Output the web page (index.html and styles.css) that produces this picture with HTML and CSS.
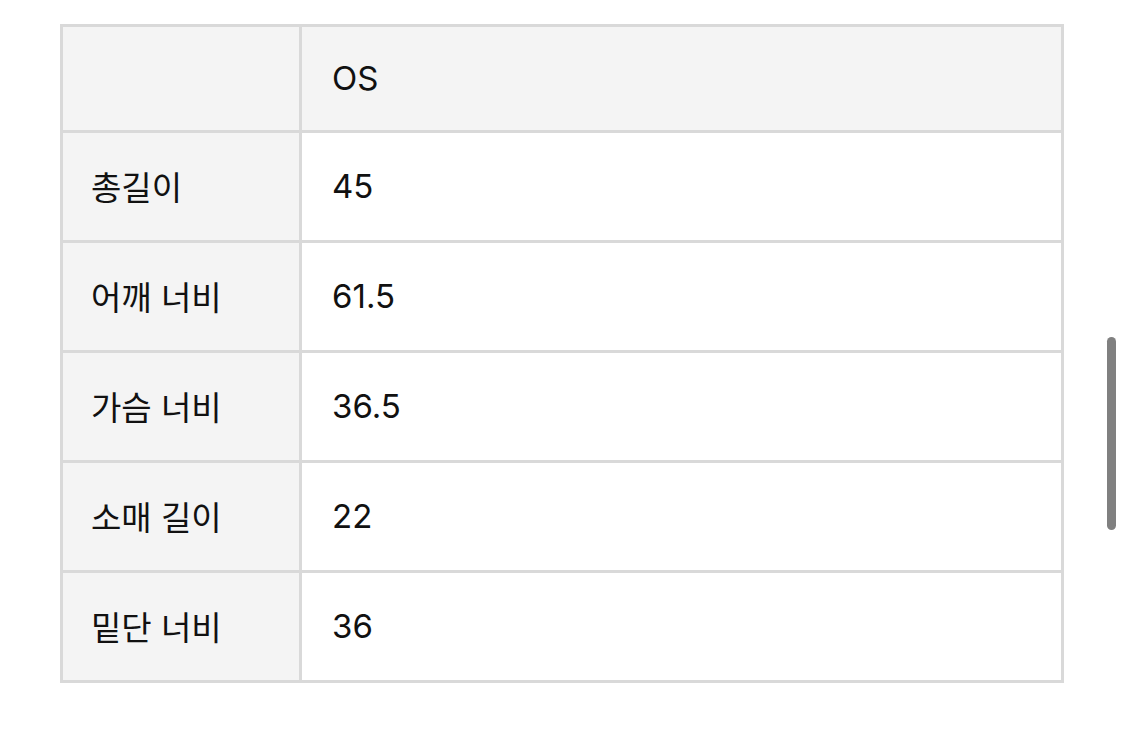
FILE: index.html
```html
<!DOCTYPE html>
<html lang="ko">
<head>
<meta charset="utf-8">
<link rel="stylesheet" href="styles.css">
</head>
<body>
<div class="page">
  <table class="size-table">
    <colgroup><col class="c1"><col class="c2"></colgroup>
    <tr class="head"><th class="label"></th><th class="val">OS</th></tr>
    <tr><th class="label">총길이</th><td class="val">45</td></tr>
    <tr><th class="label">어깨 너비</th><td class="val">61.5</td></tr>
    <tr><th class="label">가슴 너비</th><td class="val">36.5</td></tr>
    <tr><th class="label">소매 길이</th><td class="val">22</td></tr>
    <tr><th class="label">밑단 너비</th><td class="val">36</td></tr>
  </table>
</div>
<div class="scrollbar"></div>
</body>
</html>
```

FILE: styles.css
```css
html, body {
  margin: 0;
  padding: 0;
  background: #ffffff;
}
body {
  width: 1125px;
  height: 756px;
  overflow: hidden;
  position: relative;
  font-family: "Inter", "Noto Sans CJK KR", sans-serif;
  color: #111111;
}
.page {
  padding: 24px 0 0 60px;
}
.size-table {
  border-collapse: separate;
  border-spacing: 0;
  table-layout: fixed;
  width: 1004px;
  border-top: 3px solid #d9d9d9;
  border-left: 3px solid #d9d9d9;
}
.c1 { width: 239px; }
.c2 { width: 762px; }
.size-table th,
.size-table td {
  border-right: 3px solid #d9d9d9;
  border-bottom: 3px solid #d9d9d9;
  padding: 0 0 0 28px;
  text-align: left;
  vertical-align: middle;
  height: 107px;
  box-sizing: border-box;
  font-size: 33px;
  line-height: 1;
  font-weight: 400;
}
.size-table .head th {
  height: 106px;
  background: #f4f4f4;
}
.size-table th.label {
  background: #f4f4f4;
  font-family: "Noto Sans CJK KR", sans-serif;
  font-weight: 400;
  font-size: 33px;
  padding-left: 28px;
}
.size-table .val {
  padding-left: 30px;
  background: #ffffff;
}
.size-table .head .val {
  background: #f4f4f4;
}
.size-table tr:not(.head) th,
.size-table tr:not(.head) td {
  height: 110px;
}
.scrollbar {
  position: absolute;
  left: 1107px;
  top: 337px;
  width: 9px;
  height: 193px;
  border-radius: 5px;
  background: #808080;
}
```
